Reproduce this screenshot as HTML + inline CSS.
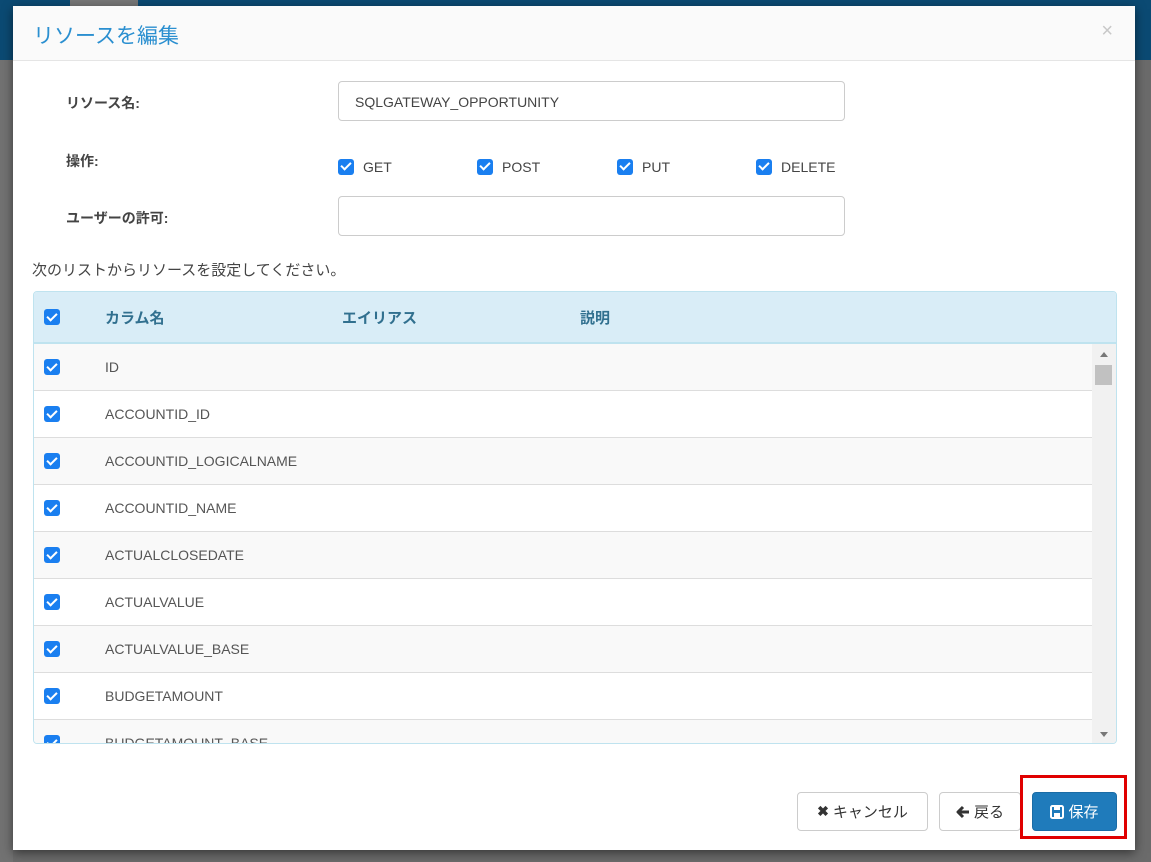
<!DOCTYPE html>
<html><head><meta charset="utf-8"><style>
*{box-sizing:border-box}
body{margin:0;width:1151px;height:862px;overflow:hidden;background:#6b6b6b;font-family:"Liberation Sans","Noto Sans CJK JP",sans-serif;color:#333;position:relative}
.topbar{position:absolute;left:0;top:0;width:1151px;height:60px;background:#0b4a73}
.topbar2{position:absolute;left:70px;top:0;width:68px;height:8px;background:#777}
.side{position:absolute;left:0;top:60px;width:13px;height:802px;background:#727272}
.modal{position:absolute;left:13px;top:6px;width:1122px;height:844px;background:#fff;box-shadow:0 3px 10px rgba(0,0,0,.5)}
.hdr{height:55px;background:#fafafa;border-bottom:1px solid #e5e5e5;position:relative}
.hdr h4{margin:0;position:absolute;left:20px;top:14px;font-size:21px;font-weight:normal;color:#2a8fd0}
.close{position:absolute;right:22px;top:14px;color:#c8c8c8;font-size:20px}
.lbl{position:absolute;font-weight:bold;font-size:14px;color:#444}
.inp{position:absolute;left:325px;width:507px;height:40px;border:1px solid #ccc;border-radius:4px;font-size:14px;padding:12px 16px;color:#444}
.cb{display:inline-block;width:16px;height:16px;background:#1a7ff0;border-radius:3px;position:relative;vertical-align:middle}
.cb:after{content:"";position:absolute;left:5px;top:1.5px;width:4px;height:8px;border:solid #fff;border-width:0 2.5px 2.5px 0;transform:rotate(45deg)}
.op{position:absolute;top:153px;font-size:14px;color:#444}
.op .cb{margin-right:9px;margin-top:-3px}
.tbl{position:absolute;left:20px;top:285px;width:1084px;height:453px;border:1px solid #bfe3ef;border-radius:4px;overflow:hidden}
.th{height:52px;background:#d9edf7;border-bottom:2px solid #bfe3ef;position:relative;font-weight:bold;color:#31708f;font-size:15px}
.th span,.row span{position:absolute}
.row{height:47px;border-bottom:1px solid #ddd;position:relative;font-size:14px;color:#555;width:1060px}
.row:nth-child(odd){background:#f9f9f9}
.sb{position:absolute;right:0;top:52px;width:24px;height:401px;background:#f1f1f1}
.btn{position:absolute;top:786px;height:39px;border:1px solid #ccc;border-radius:4px;background:#fff;font-size:15px;color:#333;display:flex;align-items:center;justify-content:center;gap:4px}
</style></head><body>
<div class="topbar"></div><div class="topbar2"></div><div class="side"></div>
<div class="modal">
<div class="hdr"><h4>リソースを編集</h4><span class="close">×</span></div>
<div class="lbl" style="left:53px;top:87px">リソース名:</div>
<div class="inp" style="top:75px">SQLGATEWAY_OPPORTUNITY</div>
<div class="lbl" style="left:53px;top:145px">操作:</div>
<div class="op" style="left:325px"><span class="cb"></span>GET</div>
<div class="op" style="left:464px"><span class="cb"></span>POST</div>
<div class="op" style="left:604px"><span class="cb"></span>PUT</div>
<div class="op" style="left:743px"><span class="cb"></span>DELETE</div>
<div class="lbl" style="left:53px;top:202px">ユーザーの許可:</div>
<div class="inp" style="top:190px"></div>
<div style="position:absolute;left:19px;top:253px;font-size:15px;color:#444">次のリストからリソースを設定してください。</div>
<div class="tbl">
<div class="th"><span style="left:10px;top:17px" class="cb"></span><span style="left:71px;top:15px">カラム名</span><span style="left:308px;top:15px">エイリアス</span><span style="left:546px;top:15px">説明</span></div>
<div>
<div class="row"><span class="cb" style="left:10px;top:15px"></span><span style="left:71px;top:15px">ID</span></div>
<div class="row"><span class="cb" style="left:10px;top:15px"></span><span style="left:71px;top:15px">ACCOUNTID_ID</span></div>
<div class="row"><span class="cb" style="left:10px;top:15px"></span><span style="left:71px;top:15px">ACCOUNTID_LOGICALNAME</span></div>
<div class="row"><span class="cb" style="left:10px;top:15px"></span><span style="left:71px;top:15px">ACCOUNTID_NAME</span></div>
<div class="row"><span class="cb" style="left:10px;top:15px"></span><span style="left:71px;top:15px">ACTUALCLOSEDATE</span></div>
<div class="row"><span class="cb" style="left:10px;top:15px"></span><span style="left:71px;top:15px">ACTUALVALUE</span></div>
<div class="row"><span class="cb" style="left:10px;top:15px"></span><span style="left:71px;top:15px">ACTUALVALUE_BASE</span></div>
<div class="row"><span class="cb" style="left:10px;top:15px"></span><span style="left:71px;top:15px">BUDGETAMOUNT</span></div>
<div class="row"><span class="cb" style="left:10px;top:15px"></span><span style="left:71px;top:15px">BUDGETAMOUNT_BASE</span></div>
</div>
<div class="sb"><div style="position:absolute;left:8px;top:8px;border:4px solid transparent;border-bottom:5px solid #777;border-top:0"></div><div style="position:absolute;left:3px;top:21px;width:17px;height:20px;background:#c1c1c1"></div><div style="position:absolute;left:8px;bottom:8px;border:4px solid transparent;border-top:5px solid #777;border-bottom:0"></div></div>
</div>
<div class="btn" style="left:784px;width:131px"><b style="font-size:14px">✖</b>キャンセル</div>
<div class="btn" style="left:926px;width:82px"><svg width="14" height="14" viewBox="0 0 14 14"><path d="M7 2L2 7L7 12M2.5 7H13" fill="none" stroke="#333" stroke-width="3" stroke-linejoin="round"/></svg>戻る</div>
<div class="btn" style="left:1019px;width:85px;background:#1f7bbb;border-color:#1a6ca6;color:#fff"><svg width="14" height="14" viewBox="0 0 14 14"><rect x="1" y="1" width="12" height="12" rx="1.5" fill="none" stroke="#fff" stroke-width="2"/><rect x="4" y="2" width="6" height="3" fill="#fff"/><rect x="4" y="8" width="6" height="4" fill="#fff"/></svg>保存</div>
</div>
<div style="position:absolute;left:1020px;top:775px;width:107px;height:64px;border:3px solid #e00000"></div>
</body></html>
